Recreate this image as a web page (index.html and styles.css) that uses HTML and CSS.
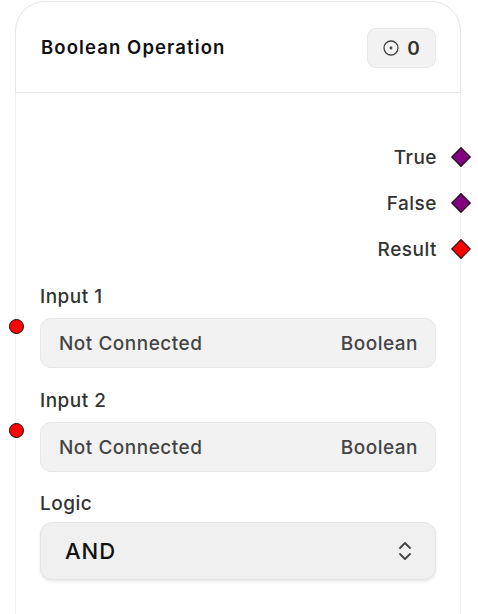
FILE: index.html
```html
<!DOCTYPE html>
<html>
<head>
<meta charset="utf-8">
<link rel="stylesheet" href="styles.css">
</head>
<body>
<div class="node">
  <div class="header">
    <div class="title">Boolean Operation</div>
    <div class="badge">
      <svg class="badge-icon" width="16" height="16" viewBox="0 0 16 16"><circle cx="8" cy="8" r="7" fill="none" stroke="#444" stroke-width="1.3"/><circle cx="8" cy="8" r="1.4" fill="#444"/></svg>
      <span>0</span>
    </div>
  </div>
  <div class="outputs">
    <div class="out-row"><span>True</span><span class="diamond purple"></span></div>
    <div class="out-row"><span>False</span><span class="diamond purple"></span></div>
    <div class="out-row"><span>Result</span><span class="diamond red"></span></div>
  </div>
  <div class="inputs">
    <div class="field">
      <div class="label">Input 1</div>
      <div class="box-wrap">
        <span class="dot"></span>
        <div class="box"><span>Not Connected</span><span>Boolean</span></div>
      </div>
    </div>
    <div class="field">
      <div class="label">Input 2</div>
      <div class="box-wrap">
        <span class="dot"></span>
        <div class="box"><span>Not Connected</span><span>Boolean</span></div>
      </div>
    </div>
    <div class="field field-logic">
      <div class="label label-logic">Logic</div>
      <div class="select">
        <span>AND</span>
        <svg width="16" height="24" viewBox="0 0 16 24"><path d="M3 9 L8 4 L13 9" fill="none" stroke="#444" stroke-width="1.8" stroke-linecap="round" stroke-linejoin="round"/><path d="M3 15 L8 20 L13 15" fill="none" stroke="#444" stroke-width="1.8" stroke-linecap="round" stroke-linejoin="round"/></svg>
      </div>
    </div>
  </div>
</div>
</body>
</html>
```

FILE: styles.css
```css
* { box-sizing: border-box; }
html, body { margin: 0; padding: 0; background: #fff; }
body {
  font-family: "Inter", "Lato", sans-serif;
  color: #333;
  overflow: hidden;
  height: 614px;
}
.node {
  margin: 1px 0 0 15px;
  width: 446px;
  height: 640px;
  border-left: 1px solid #efefef;
  border-right: 1px solid #efefef;
  border-top-left-radius: 30px;
  border-top-right-radius: 30px;
}
.header {
  height: 92px;
  border-top: 1px solid #e6e6e6;
  border-bottom: 1px solid #e6e6e6;
  border-top-left-radius: 30px;
  border-top-right-radius: 30px;
  margin: 0 -1px;
  border-left: 1px solid #e6e6e6;
  border-right: 1px solid #e6e6e6;
  display: flex;
  align-items: center;
  justify-content: space-between;
  padding: 0 24px 0 25px;
}
.title {
  font-size: 18.5px;
  font-weight: 600;
  color: #111;
  letter-spacing: 1.1px;
}
.badge {
  width: 69px;
  height: 40px;
  margin-top: 2px;
  border-radius: 9px;
  background: #f2f2f2;
  border: 1px solid #e6e6e6;
  display: flex;
  align-items: center;
  justify-content: center;
  gap: 8px;
  font-size: 19px;
  font-weight: 600;
  color: #333;
}
.outputs {
  padding-top: 52px;
  display: flex;
  flex-direction: column;
  gap: 22px;
}
.out-row {
  display: flex;
  justify-content: flex-end;
  align-items: center;
  height: 24px;
  font-size: 19px;
  font-weight: 500;
  letter-spacing: 0.5px;
  color: #333;
  margin-right: -8px;
  gap: 17px;
}
.diamond {
  width: 14px;
  height: 14px;
  transform: rotate(45deg);
  border: 1.5px solid #111;
}
.purple { background: #800080; }
.red { background: #ff0000; }
.inputs {
  padding: 24px 24px 0 24px;
  display: flex;
  flex-direction: column;
  gap: 21px;
}
.label {
  font-size: 19px;
  font-weight: 500;
  letter-spacing: 0.5px;
  color: #333;
  height: 24px;
  line-height: 24px;
  margin-bottom: 9px;
}
.field-logic { margin-top: -1px; }
.label-logic { margin-bottom: 6px; }
.box-wrap { position: relative; }
.dot {
  position: absolute;
  left: -31px;
  top: 1px;
  width: 15px;
  height: 15px;
  border-radius: 50%;
  background: #ff0000;
  border: 1.5px solid #111;
}
.box {
  height: 50px;
  border-radius: 11px;
  background: #f2f2f2;
  border: 1px solid #e6e6e6;
  display: flex;
  align-items: center;
  justify-content: space-between;
  padding: 0 17px 0 18px;
  font-size: 19px;
  font-weight: 500;
  letter-spacing: 0.5px;
  color: #444;
}
.select {
  height: 58px;
  border-radius: 12px;
  background: #f0f0f0;
  border: 1px solid #e4e4e4;
  box-shadow: 0 2px 3px rgba(0,0,0,0.08);
  display: flex;
  align-items: center;
  justify-content: space-between;
  padding: 0 22px 0 24px;
  font-size: 22px;
  font-weight: 500;
  letter-spacing: 1px;
  color: #111;
}
```
